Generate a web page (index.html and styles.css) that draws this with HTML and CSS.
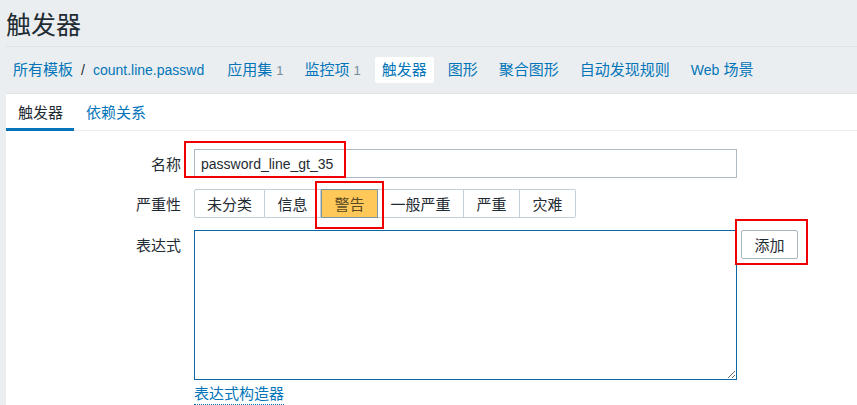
FILE: index.html
```html
<!DOCTYPE html>
<html lang="zh">
<head>
<meta charset="utf-8">
<title>触发器</title>
<link rel="stylesheet" href="styles.css">
</head>
<body>
<header class="page-header">
  <h1 class="page-title">触发器</h1>
</header>
<nav class="object-nav">
  <div class="nav-item breadcrumbs">
    <a href="#" class="link">所有模板</a>
    <span class="sep latin">/</span>
    <a href="#" class="link latin">count.line.passwd</a>
  </div>
  <div class="nav-item"><a href="#" class="link">应用集</a><span class="count latin">1</span></div>
  <div class="nav-item"><a href="#" class="link">监控项</a><span class="count latin">1</span></div>
  <div class="nav-item selected"><span class="link">触发器</span></div>
  <div class="nav-item"><a href="#" class="link">图形</a></div>
  <div class="nav-item"><a href="#" class="link">聚合图形</a></div>
  <div class="nav-item"><a href="#" class="link">自动发现规则</a></div>
  <div class="nav-item"><a href="#" class="link"><span class="latin">Web</span> 场景</a></div>
</nav>
<main class="container">
  <div class="tabs">
    <span class="tab active">触发器</span>
    <a href="#" class="tab">依赖关系</a>
  </div>
  <form class="form">
    <div class="row">
      <label class="label">名称</label>
      <div class="field"><input class="text-input latin" type="text" value="password_line_gt_35"></div>
    </div>
    <div class="row">
      <label class="label">严重性</label>
      <div class="field">
        <div class="segmented">
          <span class="seg">未分类</span>
          <span class="seg">信息</span>
          <span class="seg checked">警告</span>
          <span class="seg">一般严重</span>
          <span class="seg">严重</span>
          <span class="seg">灾难</span>
        </div>
      </div>
    </div>
    <div class="row row-top">
      <label class="label label-top">表达式</label>
      <div class="field">
        <div class="expr">
          <textarea class="textarea"></textarea>
          <button type="button" class="btn">添加</button>
        </div>
        <a href="#" class="builder-link">表达式构造器</a>
      </div>
    </div>
  </form>
</main>
<div class="mark mark-name"></div>
<div class="mark mark-severity"></div>
<div class="mark mark-add"></div>
</body>
</html>
```
FILE: styles.css
```css
* { box-sizing: border-box; }
html, body { margin: 0; padding: 0; }
body {
  position: relative;
  background: #ebeef0;
  color: #1f2c33;
  font-family: "Liberation Sans", "Noto Sans CJK SC", sans-serif;
  font-size: 15px;
  height: 405px;
  overflow: hidden;
}
a { text-decoration: none; }
.link { color: #0275b8; }
.latin { font-size: 14px; }

.page-header {
  margin-left: 6px;
  height: 47px;
  border-bottom: 1px solid #dde2e5;
  display: flex;
  align-items: center;
}
.page-title {
  margin: 4px 0 0 0;
  font-weight: normal;
  font-size: 25px;
  line-height: 30px;
  color: #1f2c33;
}

.object-nav {
  display: flex;
  align-items: center;
  height: 46px;
  padding-left: 6px;
  gap: 7px;
}
.nav-item {
  display: flex;
  align-items: center;
  height: 26px;
  padding: 0 7px;
  line-height: 26px;
}
.breadcrumbs { margin-right: 2px; }
.sep { color: #1f2c33; margin: 0 8px 0 8px; }
.count {
  font-size: 13px;
  color: #768d99;
  margin-left: 4px;
  position: relative;
  top: 1px;
}
.selected {
  background: #ffffff;
  border-radius: 2px;
}

.container {
  margin-left: 6px;
  background: #ffffff;
  border-top: 1px solid #dfe4e7;
  height: 320px;
}
.tabs {
  display: flex;
  height: 37px;
  border-bottom: 1px solid #ebeef0;
}
.tab {
  display: flex;
  align-items: center;
  padding: 0 11px 0 12px;
  color: #0275b8;
  border-bottom: 3px solid transparent;
  margin-bottom: -1px;
}
.tab.active {
  color: #1f2c33;
  border-bottom-color: #0275b8;
}
.tab + .tab { padding-left: 12px; }

.form {
  padding-top: 18px;
  display: flex;
  flex-direction: column;
  gap: 11px;
}
.row {
  display: flex;
  align-items: center;
}
.row-top { align-items: flex-start; }
.label {
  width: 175px;
  text-align: right;
  margin-right: 13px;
  color: #1f2c33;
}
.label-top { padding-top: 5px; }
.field { display: flex; flex-direction: column; }

.text-input {
  width: 543px;
  height: 29px;
  border: 1px solid #acbbc4;
  padding: 0 6px;
  font-family: inherit;
  color: #1f2c33;
  background: #ffffff;
  outline: none;
}

.segmented {
  display: flex;
  height: 29px;
}
.seg {
  display: flex;
  align-items: center;
  padding: 0 12.5px;
  border: 1px solid #c3ced5;
  border-left-width: 0;
  color: #1f2c33;
  background: #ffffff;
}
.seg:first-child { border-left-width: 1px; border-radius: 2px 0 0 2px; padding: 0 12px; }
.seg:last-child { border-radius: 0 2px 2px 0; }
.seg.checked {
  background: #ffc859;
  border: 1px solid #7f95a3;
  color: #5a4a24;
}

.expr {
  display: flex;
  align-items: flex-start;
  gap: 4px;
  margin-top: 1px;
}
.textarea {
  width: 543px;
  height: 150px;
  border: 1px solid #0e67a6;
  margin: 0;
  padding: 4px 6px;
  font-family: inherit;
  font-size: 15px;
  resize: both;
  outline: none;
  display: block;
}
.btn {
  width: 57px;
  height: 29px;
  border: 1px solid #a8b6bf;
  border-radius: 2px;
  background: #ffffff;
  color: #1f2c33;
  font-family: inherit;
  font-size: 15px;
  padding: 0;
}
.builder-link {
  align-self: flex-start;
  margin-top: 4px;
  color: #0275b8;
  line-height: 20px;
  border-bottom: 1px dotted #0275b8;
}

.mark {
  position: absolute;
  border: 2px solid #f00000;
  pointer-events: none;
}
.mark-name { left: 184px; top: 141px; width: 162px; height: 37px; }
.mark-severity { left: 315px; top: 181px; width: 69px; height: 48px; }
.mark-add { left: 735px; top: 219px; width: 73px; height: 46px; }
```
